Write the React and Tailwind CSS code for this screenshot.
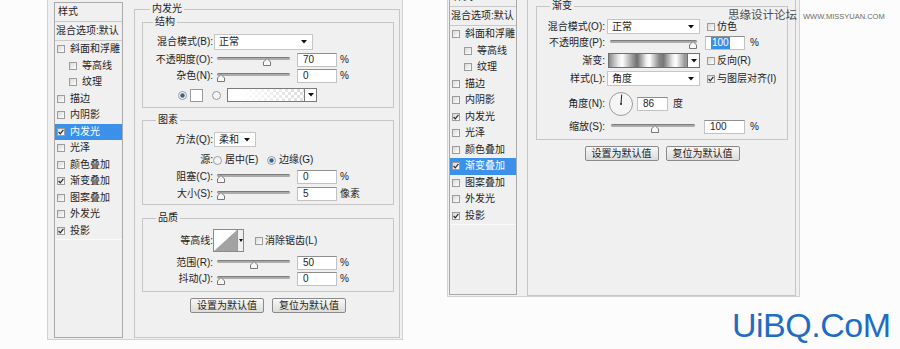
import React from 'react';

// layer style list (same for both dialogs)
const items = [
  { t: '斜面和浮雕' },
  { t: '等高线', sub: true },
  { t: '纹理', sub: true },
  { t: '描边' },
  { t: '内阴影' },
  { t: '内发光', c: true },
  { t: '光泽' },
  { t: '颜色叠加' },
  { t: '渐变叠加', c: true },
  { t: '图案叠加' },
  { t: '外发光' },
  { t: '投影', c: true },
];

const Check = ({ checked }) => (
  <span className="w-[8px] h-[8px] shrink-0 border border-[#9c9c9c] bg-gradient-to-br from-[#d9d9d9] to-white flex items-center justify-center">
    {checked && (
      <svg width="6" height="6" viewBox="0 0 6 6">
        <path d="M0.6 3 L2.3 4.8 L5.4 0.9" stroke="#2a2a2a" strokeWidth="1.2" fill="none" />
      </svg>
    )}
  </span>
);

const Radio = ({ on }) => (
  <svg width="9" height="9" viewBox="0 0 9 9" className="shrink-0">
    <circle cx="4.5" cy="4.5" r="4" fill="#f4f4f4" stroke="#9a9a9a" />
    {on && <circle cx="4.5" cy="4.5" r="2.2" fill="#2d6592" />}
  </svg>
);

const Arrow = () => (
  <svg width="6" height="4" viewBox="0 0 6 4" className="shrink-0">
    <path d="M0 0H6L3 3.5Z" fill="#111" />
  </svg>
);

const Slider = ({ value, className }) => (
  <div className={`relative h-[14px] shrink-0 ${className}`}>
    <div className="absolute left-0 right-0 top-[4px] h-[3px] rounded-full bg-[#ababab] border-t border-[#7c7c7c]" />
    <svg
      width="8"
      height="8"
      viewBox="0 0 8 8"
      className="absolute top-[5px]"
      style={{ left: `calc(${value}% - ${(value * 8) / 100}px)` }}
    >
      <polygon points="4,0.5 7.5,4 7.5,7.5 0.5,7.5 0.5,4" fill="#f8f8f8" stroke="#777" />
    </svg>
  </div>
);

const Field = ({ value, className, sel }) => (
  <div className={`h-[14px] bg-white border border-[#c2c2c2] border-t-[#8e8e8e] flex items-center pl-[5px] shrink-0 ${className}`}>
    {sel ? <span className="bg-[#3b8ee5] text-white px-[1px]">{value}</span> : value}
  </div>
);

const Select = ({ value, className }) => (
  <div className={`bg-white border border-[#c6c6c6] flex items-center justify-between pl-[4px] pr-[5px] shrink-0 ${className}`}>
    <span>{value}</span>
    <Arrow />
  </div>
);

const Btn = ({ children }) => (
  <div className="w-[74px] h-[15px] border border-[#8a8a8a] rounded-[2px] bg-gradient-to-b from-[#f7f7f7] to-[#dcdcdc] flex items-center justify-center">
    {children}
  </div>
);

const Group = ({ title, className, legendClass, children }) => (
  <fieldset className={`border border-[#c6c6c6] min-w-0 ${className}`}>
    <legend className={`px-[2px] leading-[12px] ${legendClass}`}>{title}</legend>
    {children}
  </fieldset>
);

const Row = ({ label, lw, className, children }) => (
  <div className={`flex items-center ${className}`}>
    <span className={`text-right shrink-0 whitespace-nowrap ${lw}`}>{label}</span>
    {children}
  </div>
);

const CheckText = ({ checked, children, className }) => (
  <div className={`flex items-center gap-[2px] whitespace-nowrap ${className}`}>
    <Check checked={checked} />
    <span>{children}</span>
  </div>
);

const StyleList = ({ active, className }) => (
  <div className={`border border-[#a9a9a9] bg-[#f0f0f0] flex flex-col shrink-0 ${className}`}>
    <div className="h-[19px] border-b border-[#c9c9c9] pl-[3px] flex items-center">样式</div>
    <div className="h-[19px] border-b border-[#c9c9c9] pl-[1px] flex items-center whitespace-nowrap">混合选项:默认</div>
    {items.map((it, i) => (
      <div
        key={it.t}
        className={`h-[16.5px] flex items-center gap-[5px] whitespace-nowrap ${it.sub ? 'pl-[14px]' : 'pl-[2px]'} ${
          i === active ? 'bg-[#3b91ea] text-white' : ''
        }`}
      >
        <Check checked={it.c} />
        <span>{it.t}</span>
      </div>
    ))}
    <div className="border-t border-[#fafafa]" />
  </div>
);

const GlowPanel = () => (
  <Group
    title="内发光"
    className="ml-[11px] mt-[3px] w-[266px] h-[335px] pl-[7px] pr-[5px] shrink-0"
    legendClass="ml-[8px]"
  >
    <Group title="结构" className="mt-[1px] w-full pb-[5px]" legendClass="ml-[10px]">
      <Row lw="w-[70px]" className="mt-[6px] h-[16px]" label="混合模式(B):">
        <Select value="正常" className="ml-[1px] w-[99px] h-[16px]" />
      </Row>
      <Row lw="w-[70px]" className="mt-[3px] h-[14px]" label="不透明度(O):">
        <Slider value={70} className="ml-[4px] w-[73px]" />
        <Field value="70" className="ml-[7px] w-[40px]" />
        <span className="ml-[3px]">%</span>
      </Row>
      <Row lw="w-[70px]" className="mt-[2px] h-[14px]" label="杂色(N):">
        <Slider value={0} className="ml-[4px] w-[73px]" />
        <Field value="0" className="ml-[7px] w-[40px]" />
        <span className="ml-[3px]">%</span>
      </Row>
      <div className="mt-[5px] h-[14px] flex items-center pl-[35px]">
        <Radio on />
        <div className="ml-[3px] w-[13px] h-[13px] bg-white border border-[#9a9a9a]" />
        <div className="ml-[9px]">
          <Radio />
        </div>
        <div className="ml-[6px] w-[90px] h-[14px] border border-[#7a7a7a] flex">
          <div className="flex-1 bg-[linear-gradient(to_right,#fff_15%,rgba(255,255,255,0.15)),repeating-conic-gradient(#d6d6d6_0_25%,#fff_0_50%)] bg-[length:100%_100%,6px_6px]" />
          <div className="w-[12px] border-l border-[#7a7a7a] bg-white flex items-center justify-center">
            <Arrow />
          </div>
        </div>
      </div>
    </Group>

    <Group title="图素" className="mt-[6px] w-full pb-[3px]" legendClass="ml-[13px]">
      <Row lw="w-[70px]" className="mt-[6px] h-[15px]" label="方法(Q):">
        <Select value="柔和" className="ml-[1px] w-[42px] h-[15px]" />
      </Row>
      <Row lw="w-[70px]" className="mt-[6px] h-[14px]" label="源:">
        <div className="w-[54px] flex items-center gap-[3px] whitespace-nowrap">
          <Radio />
          <span>居中(E)</span>
        </div>
        <div className="flex items-center gap-[3px] whitespace-nowrap">
          <Radio on />
          <span>边缘(G)</span>
        </div>
      </Row>
      <Row lw="w-[70px]" className="mt-[3px] h-[14px]" label="阻塞(C):">
        <Slider value={0} className="ml-[4px] w-[73px]" />
        <Field value="0" className="ml-[7px] w-[40px]" />
        <span className="ml-[3px]">%</span>
      </Row>
      <Row lw="w-[70px]" className="mt-[3px] h-[14px]" label="大小(S):">
        <Slider value={0} className="ml-[4px] w-[73px]" />
        <Field value="5" className="ml-[7px] w-[40px]" />
        <span className="ml-[3px]">像素</span>
      </Row>
    </Group>

    <Group title="品质" className="mt-[7px] w-full pb-[5px]" legendClass="ml-[13px]">
      <Row lw="w-[70px]" className="mt-[5px] h-[23px]" label="等高线:">
        <div className="w-[31px] h-[23px] border border-[#8a8a8a] bg-white flex shrink-0">
          <svg width="23" height="21" viewBox="0 0 23 21">
            <polygon points="0,21 23,0 23,21" fill="#a3a3a3" />
          </svg>
          <div className="w-[6px] border-l border-[#9a9a9a] bg-[#f0f0f0] flex items-center justify-center">
            <svg width="4" height="3" viewBox="0 0 4 3">
              <path d="M0 0H4L2 3Z" fill="#111" />
            </svg>
          </div>
        </div>
        <CheckText className="ml-[11px]">消除锯齿(L)</CheckText>
      </Row>
      <Row lw="w-[70px]" className="mt-[4px] h-[14px]" label="范围(R):">
        <Slider value={50} className="ml-[4px] w-[73px]" />
        <Field value="50" className="ml-[7px] w-[40px]" />
        <span className="ml-[3px]">%</span>
      </Row>
      <Row lw="w-[70px]" className="mt-[2px] h-[14px]" label="抖动(J):">
        <Slider value={0} className="ml-[4px] w-[73px]" />
        <Field value="0" className="ml-[7px] w-[40px]" />
        <span className="ml-[3px]">%</span>
      </Row>
    </Group>

    <div className="mt-[6px] flex justify-center gap-[8px]">
      <Btn>设置为默认值</Btn>
      <Btn>复位为默认值</Btn>
    </div>
  </Group>
);

const GradientPanel = () => (
  <div className="ml-[10px] w-[269px] h-[296px] border-l border-r border-b border-[#c6c6c6] pl-[8px] shrink-0">
    <Group title="渐变" className="w-[252px] pb-[5px]" legendClass="ml-[13px]">
      <Row lw="w-[68px]" className="mt-[7px] h-[15px]" label="混合模式(O):">
        <Select value="正常" className="ml-[2px] w-[93px] h-[15px]" />
        <CheckText className="ml-[7px]">仿色</CheckText>
      </Row>
      <Row lw="w-[68px]" className="mt-[2px] h-[14px]" label="不透明度(P):">
        <Slider value={100} className="ml-[5px] w-[87px]" />
        <Field value="100" sel className="ml-[8px] w-[40px]" />
        <span className="ml-[5px]">%</span>
      </Row>
      <Row lw="w-[68px]" className="mt-[3px] h-[15px]" label="渐变:">
        <div className="ml-[3px] w-[92px] h-[15px] border border-[#6f6f6f] flex shrink-0">
          <div className="flex-1 bg-[linear-gradient(to_right,#8a8a8a,#e8e8e8_12%,#fff_17%,#9a9a9a_30%,#6f6f6f_36%,#f0f0f0_48%,#fff_52%,#8a8a8a_64%,#777_70%,#eee_82%,#fff_86%,#999_97%)]" />
          <div className="w-[12px] border-l border-[#6f6f6f] bg-white flex items-center justify-center">
            <Arrow />
          </div>
        </div>
        <CheckText className="ml-[7px]">反向(R)</CheckText>
      </Row>
      <Row lw="w-[68px]" className="mt-[3px] h-[15px]" label="样式(L):">
        <Select value="角度" className="ml-[2px] w-[93px] h-[15px]" />
        <CheckText checked className="ml-[7px]">与图层对齐(I)</CheckText>
      </Row>
      <Row lw="w-[68px]" className="mt-[6px] h-[24px]" label="角度(N):">
        <svg width="24" height="24" viewBox="0 0 24 24" className="ml-[4px] shrink-0">
          <circle cx="12" cy="12" r="11.5" fill="#f5f5f5" stroke="#9a9a9a" />
          <line x1="12" y1="12" x2="12.7" y2="2.5" stroke="#222" strokeWidth="1" />
          <circle cx="12" cy="12" r="1" fill="#222" />
        </svg>
        <Field value="86" className="ml-[4px] w-[31px] h-[13px]" />
        <span className="ml-[5px]">度</span>
      </Row>
      <Row lw="w-[68px]" className="mt-[4px] h-[14px]" label="缩放(S):">
        <Slider value={53} className="ml-[6px] w-[84px]" />
        <Field value="100" className="ml-[9px] w-[41px]" />
        <span className="ml-[5px]">%</span>
      </Row>
    </Group>
    <div className="mt-[6px] w-[252px] flex justify-center gap-[7px]">
      <Btn>设置为默认值</Btn>
      <Btn>复位为默认值</Btn>
    </div>
  </div>
);

const App = () => {
  return (
    <div className="w-[900px] h-[349px] bg-[#fcfcfc] flex items-start relative overflow-hidden text-[10px] leading-[12px] text-[#1e1e1e] font-['Liberation_Sans','Noto_Sans_CJK_SC',sans-serif]">
      {/* left dialog: inner glow */}
      <div className="ml-[47px] w-[356px] h-[340px] bg-[#f0f0f0] border-l border-r border-b border-[#d2d2d2] flex items-start shrink-0">
        <StyleList active={5} className="ml-[6px] mt-[2px] w-[69px] h-[336px]" />
        <GlowPanel />
      </div>

      {/* right column: gradient overlay dialog + logo */}
      <div className="ml-[44px] flex flex-col shrink-0">
        <div className="w-[353px] h-[297px] bg-[#f0f0f0] border-l border-r border-b border-[#d2d2d2] flex items-start overflow-hidden">
          <StyleList active={8} className="ml-[1px] -mt-[13px] w-[68px] h-[308px]" />
          <GradientPanel />
        </div>
        <div className="ml-[285px] mt-[11px] text-[34px] leading-none tracking-[-0.5px] text-[#1f6dc2] whitespace-nowrap">
          UiBQ.CoM
        </div>
      </div>

      {/* watermark */}
      <div className="absolute left-[728px] top-[8px] text-[11.5px] leading-[14px] text-[#4d4d4d] whitespace-nowrap">
        思缘设计论坛
      </div>
      <div className="absolute left-[803px] top-[12px] text-[7.5px] leading-[9px] text-[#6a6a6a] whitespace-nowrap">
        WWW.MISSYUAN.COM
      </div>
    </div>
  );
};

export default App;
